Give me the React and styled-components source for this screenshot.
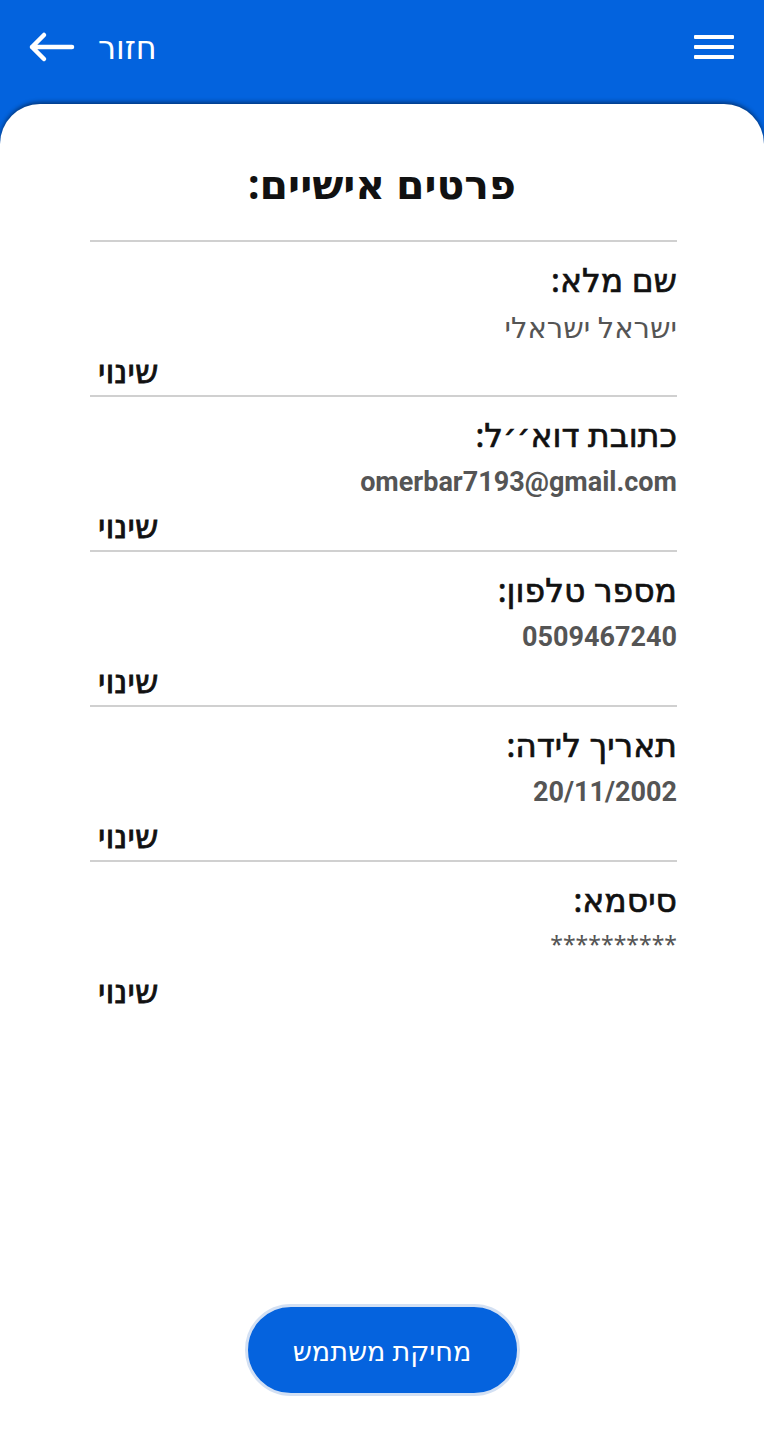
import React from "react";
import styled, { createGlobalStyle } from "styled-components";

const GlobalStyle = createGlobalStyle`
  html, body {
    margin: 0;
    padding: 0;
    background: #ffffff;
  }
  body {
    font-family: "Noto Sans", "DejaVu Sans", "Liberation Sans", sans-serif;
  }
`;

const fields = [
  { label: "שם מלא:", value: "ישראל ישראלי", kind: "text" },
  { label: "כתובת דוא׳׳ל:", value: "omerbar7193@gmail.com", kind: "latin" },
  { label: "מספר טלפון:", value: "0509467240", kind: "latin" },
  { label: "תאריך לידה:", value: "20/11/2002", kind: "latin" },
  { label: "סיסמא:", value: "**********", kind: "stars" },
];

const App = () => {
  return (
    <Page>
      <GlobalStyle />
      <TopBar>
        <BackButton>
          <svg width="48" height="32" viewBox="0 0 48 32" fill="none">
            <path
              d="M45 16H5M17 4L5 16l12 12"
              stroke="#fff"
              strokeWidth="4.5"
              strokeLinecap="round"
              strokeLinejoin="round"
            />
          </svg>
          <BackLabel>חזור</BackLabel>
        </BackButton>
        <MenuButton>
          <span />
          <span />
          <span />
        </MenuButton>
      </TopBar>
      <Card>
        <Title>פרטים אישיים:</Title>
        <List>
          {fields.map((f) => (
            <Field key={f.label}>
              <Label>{f.label}</Label>
              <Value kind={f.kind}>{f.value}</Value>
              <ChangeRow>
                <ChangeLink>שינוי</ChangeLink>
              </ChangeRow>
            </Field>
          ))}
        </List>
        <DeleteButton>מחיקת משתמש</DeleteButton>
      </Card>
    </Page>
  );
};
export default App;

const Page = styled.div`
  min-height: 100vh;
  display: flex;
  flex-direction: column;
  background: #0363de;
`;

const TopBar = styled.header`
  height: 104px;
  box-sizing: border-box;
  display: flex;
  align-items: center;
  justify-content: space-between;
  padding: 0 30px 10px 27px;
`;

const BackButton = styled.div`
  display: flex;
  align-items: center;
  gap: 23px;
`;

const BackLabel = styled.span`
  color: #fff;
  font-size: 32px;
  line-height: 36px;
  direction: rtl;
`;

const MenuButton = styled.div`
  display: flex;
  flex-direction: column;
  gap: 6px;
  width: 40px;
  span {
    display: block;
    height: 4px;
    background: #fff;
    border-radius: 1px;
  }
`;

const Card = styled.main`
  flex: 1;
  display: flex;
  flex-direction: column;
  align-items: center;
  background: #fff;
  border-radius: 40px 40px 0 0;
  box-shadow: 0 -2px 4px rgba(0, 0, 0, 0.45);
  padding: 56px 0 46px;
  direction: rtl;
`;

const Title = styled.h1`
  margin: 0 0 34px;
  font-size: 41px;
  line-height: 46px;
  font-weight: 700;
  color: #111;
`;

const List = styled.section`
  width: 587px;
  margin-left: 3px;
  display: flex;
  flex-direction: column;
`;

const Field = styled.div`
  border-top: 2px solid #d0d0d0;
  padding: 18px 0 8px;
  display: flex;
  flex-direction: column;
`;

const Label = styled.div`
  font-size: 33px;
  line-height: 40px;
  font-weight: 400;
  -webkit-text-stroke: 0.7px #111;
  color: #111;
`;

const Value = styled.div`
  margin-top: 9px;
  height: 36px;
  line-height: ${(p) => (p.kind === "stars" ? "30px" : "36px")};
  color: #555;
  font-size: ${(p) =>
    p.kind === "latin" ? "27px" : p.kind === "stars" ? "23px" : "29px"};
  font-weight: ${(p) => (p.kind === "latin" ? 700 : 400)};
  font-family: ${(p) =>
    p.kind === "latin"
      ? "Roboto, 'Liberation Sans', sans-serif"
      : "'Noto Sans', 'DejaVu Sans', sans-serif"};
  direction: ${(p) => (p.kind === "latin" ? "ltr" : "rtl")};
  text-align: right;
`;

const ChangeRow = styled.div`
  margin-top: 10px;
  display: flex;
  justify-content: flex-end;
  padding-left: 8px;
`;

const ChangeLink = styled.span`
  font-size: 33px;
  line-height: 32px;
  font-weight: 400;
  -webkit-text-stroke: 0.8px #111;
  color: #111;
`;

const DeleteButton = styled.button`
  margin-top: auto;
  width: 275px;
  height: 92px;
  border-radius: 46px;
  border: 3px solid #d3e0f3;
  background: #0563de;
  color: #fff;
  font-family: "Noto Sans", "DejaVu Sans", sans-serif;
  font-size: 27px;
  direction: rtl;
`;
